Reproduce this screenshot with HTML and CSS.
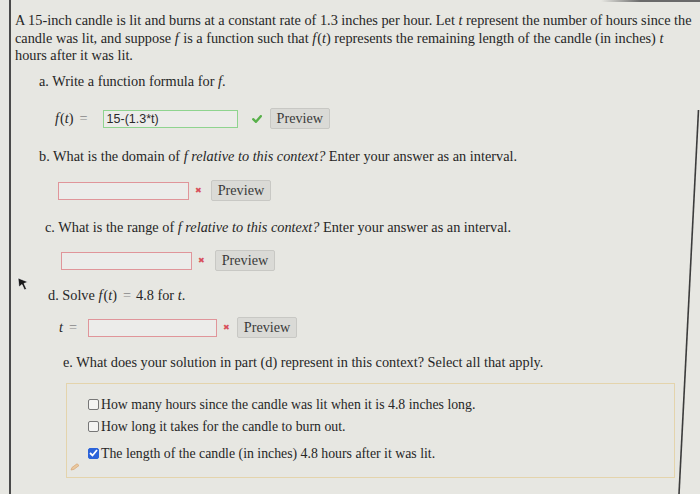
FILE: index.html
```html
<!DOCTYPE html>
<html>
<head>
<meta charset="utf-8">
<link rel="stylesheet" href="styles.css">
</head>
<body>
<div class="page">
  <p class="intro">A 15-inch candle is lit and burns at a constant rate of 1.3 inches per hour. Let <i>t</i> represent the number of hours since the candle was lit, and suppose <i class="fn">f</i> is a function such that <i class="fn">f</i>(<i>t</i>) represents the remaining length of the candle (in inches) <i>t</i> hours after it was lit.</p>

  <div class="part part-a">
    <div class="q">a. Write a function formula for <i>f</i>.</div>
    <div class="answer ans-a">
      <span class="math"><i class="fn">f</i>(<i>t</i>)<span class="eq">=</span></span>
      <span class="field ok">15-(1.3*t)</span>
      <svg class="mark" width="10" height="8" viewBox="0 0 10 8"><path d="M1.2 4.2 L4 6.8 L8.8 1.2" fill="none" stroke="#58b04a" stroke-width="2.4" stroke-linecap="round" stroke-linejoin="round"/></svg>
      <span class="btn">Preview</span>
    </div>
  </div>

  <div class="part part-b">
    <div class="q">b. What is the domain of <i>f</i> <i>relative to this context?</i> Enter your answer as an interval.</div>
    <div class="answer ans-b">
      <span class="field bad"></span>
      <span class="x">&#x2716;</span>
      <span class="btn">Preview</span>
    </div>
  </div>

  <div class="part part-c">
    <div class="q">c. What is the range of <i>f</i> <i>relative to this context?</i> Enter your answer as an interval.</div>
    <div class="answer ans-c">
      <span class="field bad"></span>
      <span class="x">&#x2716;</span>
      <span class="btn">Preview</span>
    </div>
  </div>

  <div class="part part-d">
    <div class="q">d. Solve <i class="fn">f</i>(<i>t</i>)<span class="eq">=</span>4.8 for <i>t</i>.</div>
    <div class="answer ans-d">
      <span class="math"><i>t</i><span class="eq">=</span></span>
      <span class="field bad"></span>
      <span class="x">&#x2716;</span>
      <span class="btn">Preview</span>
    </div>
  </div>

  <div class="part part-e">
    <div class="q">e. What does your solution in part (d) represent in this context? Select all that apply.</div>
    <div class="choices">
      <label class="choice"><span class="box"></span>How many hours since the candle was lit when it is 4.8 inches long.</label>
      <label class="choice"><span class="box"></span>How long it takes for the candle to burn out.</label>
      <label class="choice"><span class="box checked"><svg width="9" height="8" viewBox="0 0 9 8"><path d="M1 4 L3.5 6.5 L8 1" fill="none" stroke="#fff" stroke-width="1.8"/></svg></span>The length of the candle (in inches) 4.8 hours after it was lit.</label>
      <svg class="pencil" width="10" height="8" viewBox="0 0 10 8"><path d="M1 7 L2 4.5 L7 0.8 L9 2.5 L4 6.3 Z" fill="#e9c9a0" stroke="#d9a878" stroke-width="0.8"/></svg>
    </div>
  </div>

  <svg class="frame-edge" width="30" height="384" viewBox="0 0 30 384"><line x1="28.5" y1="0" x2="9" y2="384" stroke="#3c3c3c" stroke-width="1.6"/></svg>
  <span class="top-edge"></span>
  <svg class="cursor" width="12" height="14" viewBox="0 0 12 14"><path d="M1 1 L11 5 L7 6.5 L9.5 12 L7.5 13 L5 7.5 L2 10 Z" fill="#1a1a1a" stroke="#fff" stroke-width="0.6"/></svg>
</div>
</body>
</html>
```

FILE: styles.css
```css
html, body {
  margin: 0;
  padding: 0;
}
body {
  background: #e7e7e2;
  font-family: "Liberation Serif", "Times New Roman", serif;
  color: #262626;
  width: 700px;
  height: 494px;
  overflow: hidden;
}
.page {
  position: relative;
  margin-left: 9px;
  height: 494px;
  border-left: 2px solid #4a4a4a;
  padding: 12px 0 0 4px;
  box-sizing: border-box;
  font-size: 14.3px;
}
.intro {
  margin: 0;
  line-height: 17.6px;
  width: 680px;
}
i.fn { margin-right: 1px; }
.part {
  display: flex;
  flex-direction: column;
}
.q {
  line-height: 18px;
}
.part-a { margin: 7px 0 0 24px; }
.part-b { margin: 17px 0 0 24px; }
.part-c { margin: 16px 0 0 30px; }
.part-d { margin: 14px 0 0 33px; }
.part-e { margin: 14px 0 0 48px; }

.answer {
  display: flex;
  align-items: center;
  height: 22px;
}
.ans-a { margin: 18px 0 0 16px; }
.ans-b { margin: 15px 0 0 19px; }
.ans-c { margin: 14px 0 0 16px; }
.ans-d { margin: 13px 0 0 11px; }

.math { margin-right: 10px; white-space: nowrap; }
.eq { color: #888; margin: 0 5px 0 6px; }
.ans-d .math { margin-right: 6px; }

.field {
  display: inline-block;
  box-sizing: border-box;
  height: 18px;
  background: #ececea;
  font-family: "Liberation Sans", Arial, sans-serif;
  font-size: 12.5px;
  line-height: 16px;
  padding-left: 3px;
  color: #2a2a2a;
}
.field.ok {
  width: 135px;
  border: 1px solid #8fd48f;
}
.field.bad {
  width: 131px;
  border: 1px solid #e0959a;
}
.ans-d .field.bad { width: 129px; }
.mark { margin-left: 14px; }
.x {
  color: #d8505a;
  font-size: 8px;
  margin-left: 6px;
  font-family: "DejaVu Sans", sans-serif;
}
.btn {
  display: inline-block;
  box-sizing: border-box;
  height: 21px;
  line-height: 19px;
  padding: 0 6px;
  border: 1px solid #c8c8c4;
  border-radius: 2px;
  background: #dadad6;
  color: #3a3a3a;
  font-size: 14.2px;
}
.ans-a .btn { margin-left: 8px; }
.ans-b .btn { margin-left: 9px; }
.ans-c .btn { margin-left: 10px; }
.ans-d .btn { margin-left: 7px; }

.choices {
  position: relative;
  margin: 12px 0 0 3px;
  width: 609px;
  box-sizing: border-box;
  height: 95px;
  border: 1px solid #e4d4ac;
  padding: 12px 0 0 21px;
  display: flex;
  flex-direction: column;
  gap: 5px;
  font-size: 13.8px;
}
.choice {
  display: flex;
  align-items: center;
  line-height: 17px;
}
.choice:last-of-type { margin-top: 5px; }
.box {
  display: inline-flex;
  align-items: center;
  justify-content: center;
  width: 11px;
  height: 11px;
  box-sizing: border-box;
  border: 1px solid #777;
  border-radius: 2px;
  background: #f4f4f2;
  margin-right: 2px;
}
.box.checked {
  background: #2b63d9;
  border-color: #2b63d9;
}
.pencil {
  position: absolute;
  left: 3px;
  bottom: 6px;
}
.frame-edge {
  position: absolute;
  left: 659px;
  top: 110px;
}
.top-edge {
  position: absolute;
  left: 590px;
  right: 0;
  top: 0;
  height: 2px;
  background: linear-gradient(to right, rgba(90,90,90,0), #6a6a6a 40%);
}
.cursor {
  position: absolute;
  left: 6px;
  top: 277px;
}
```
